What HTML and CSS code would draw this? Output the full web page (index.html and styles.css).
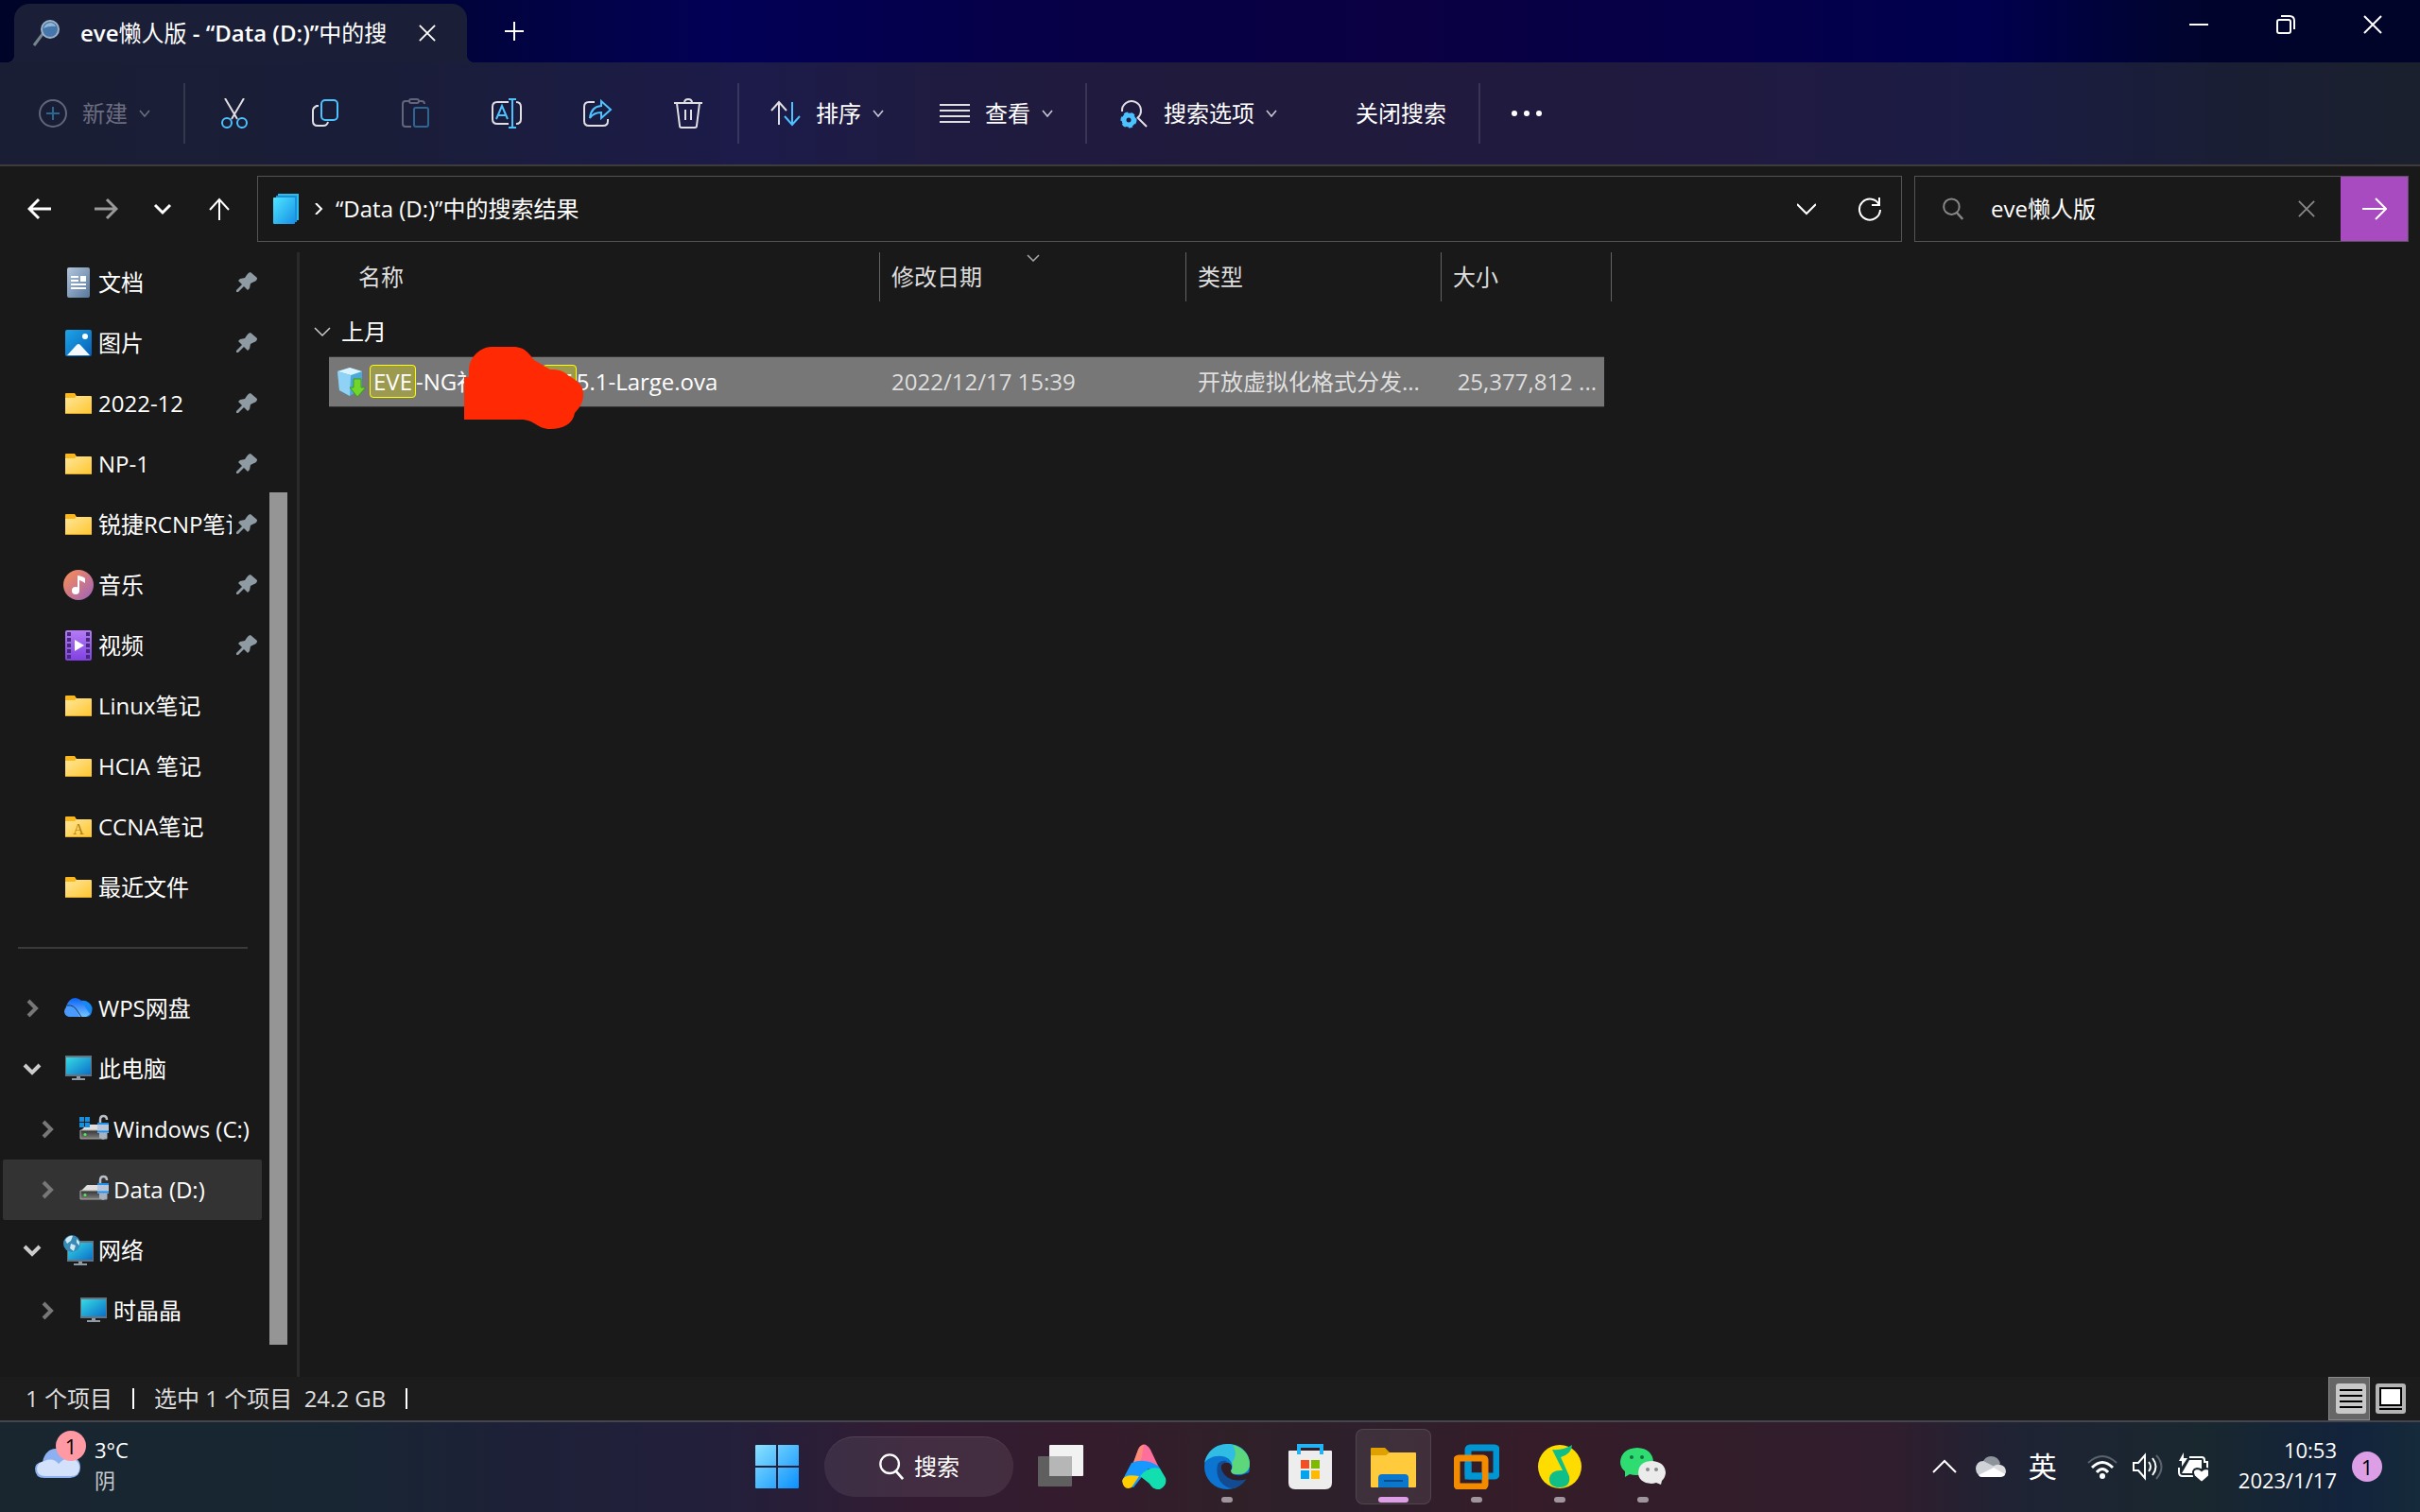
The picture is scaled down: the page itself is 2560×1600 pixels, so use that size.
FILE: index.html
```html
<!DOCTYPE html>
<html lang="zh-CN">

<head>
    <meta charset="utf-8">
    <title>eve懒人版 - “Data (D:)”中的搜索结果</title>
    <link rel="stylesheet" href="styles.css">
</head>

<body>
    <!-- shared icons -->
    <svg class="sprite" aria-hidden="true">
        <defs>
            <linearGradient id="g-folder" x1="0" y1="0" x2="1" y2="1"><stop offset="0" stop-color="#ffe69a"/><stop offset="1" stop-color="#ffc62f"/></linearGradient>
            <linearGradient id="g-screen" x1="0" y1="0" x2="1" y2="1"><stop offset="0" stop-color="#36dbe4"/><stop offset="1" stop-color="#0a6fc9"/></linearGradient>
            <linearGradient id="g-pages" x1="0" y1="0" x2="1" y2="1"><stop offset="0" stop-color="#4fe6ff"/><stop offset="1" stop-color="#1690e6"/></linearGradient>
            <linearGradient id="g-doc" x1="0" y1="0" x2="1" y2="1"><stop offset="0" stop-color="#b3c6dc"/><stop offset="1" stop-color="#57779c"/></linearGradient>
            <linearGradient id="g-pic" x1="0" y1="0" x2="1" y2="1"><stop offset="0" stop-color="#1ea5e8"/><stop offset="1" stop-color="#0560b8"/></linearGradient>
            <linearGradient id="g-music" x1="0" y1="0" x2="1" y2="1"><stop offset="0" stop-color="#ff8f4f"/><stop offset="1" stop-color="#9b62c0"/></linearGradient>
            <linearGradient id="g-video" x1="0" y1="0" x2="0" y2="1"><stop offset="0" stop-color="#b57bf6"/><stop offset="1" stop-color="#8140e2"/></linearGradient>
            <linearGradient id="g-win" x1="0" y1="0" x2="1" y2="1"><stop offset="0" stop-color="#8be2ff"/><stop offset="1" stop-color="#0a90ff"/></linearGradient>
            <linearGradient id="g-blue" x1="0" y1="0" x2="0" y2="1"><stop offset="0" stop-color="#0a62f5"/><stop offset="1" stop-color="#77c4ff"/></linearGradient>
            <linearGradient id="g-drive" x1="0" y1="0" x2="0" y2="1"><stop offset="0" stop-color="#333"/><stop offset="1" stop-color="#7d7d7d"/></linearGradient>
        </defs>
        <symbol id="chev-down" viewBox="0 0 12 12"><path d="M1 3l5 6 5-6" fill="none" stroke="currentColor" stroke-width="1.6"/></symbol>
        <symbol id="x" viewBox="0 0 20 20"><path d="M1 1l18 18M19 1L1 19" fill="none" stroke="currentColor" stroke-width="2"/></symbol>
        <symbol id="chev-tree" viewBox="0 0 20 20"><path d="M6 2l8 8-8 8" fill="none" stroke="currentColor" stroke-width="4"/></symbol>
        <symbol id="pin" viewBox="0 0 22 22"><path d="M11 3q2-3 4-3l7 6q0 3-3 4l-4 2-1 5-2 2-4-4-6 6H0v-2l6-6-4-4 2-2 5-1z" fill="#8f9ba3"/></symbol>
        <symbol id="folder" viewBox="0 0 32 32"><path d="M2 6q0-1 1-1h9l2 3h15v6H2z" fill="#fbb81c"/><path d="M2 10h10l2-2h15q1 0 1 1v17q0 1-1 1H3q-1 0-1-1z" fill="url(#g-folder)"/><path d="M2 26.500h28" stroke="#e0a72b"/></symbol>
        <symbol id="monitor" viewBox="0 0 32 32"><path d="M2 2h28v22H2z" fill="#68727c"/><path d="M3 4h26v18H3z" fill="url(#g-screen)"/><path d="M14 24h4v2h5v2H9v-2h5z" fill="#8f9ba5"/></symbol>
        <symbol id="drive" viewBox="0 0 32 32"><path d="M2 18l7-7h20v9H2z" fill="#dedede"/><path d="M2 17h28v9H2z" fill="url(#g-drive)" stroke="#aaa"/><circle cx="7" cy="21.500" r="1.500" fill="#4df04d"/><path d="M23 11V6q0-4 3.500-4T30 6" fill="none" stroke="#b9c0c8" stroke-width="2.500"/><path d="M20 10h12v10H20z" fill="#b9c7dc"/><path d="M20 10h12M20 18.500h12" stroke="#2090ea" stroke-width="2"/><path d="M22 20h8v5l-4 2-4-2z" fill="#a6b2bd"/></symbol>
        <symbol id="mag" viewBox="0 0 28 30"><circle cx="12" cy="12" r="10.500" fill="none" stroke="currentColor" stroke-width="2.500"/><path d="M19 20l8 9" stroke="currentColor" stroke-width="3"/></symbol>
    </svg>

    <header class="chrome">
        <div class="titlebar">
            <div class="tab">
                <svg class="ico-28" viewBox="0 0 28 28"><path d="M1 27l9-12" stroke="#75858c" stroke-width="3"/><circle cx="18" cy="10" r="9" fill="#4576ac" stroke="#9db4c6" stroke-width="2"/><path d="M11 9q2-6 8-6 4 1 5 4-7-1-13 2z" fill="#94b6d5"/></svg>
                <span class="tab-title"><b>eve</b>懒人版<b> - “Data (D:)”</b>中的搜</span>
                <button class="plain" aria-label="关闭标签页"><svg class="ico-18"><use href="#x"/></svg></button>
            </div>
            <button class="plain new-tab" aria-label="新标签页"><svg class="ico-20" viewBox="0 0 20 20"><path d="M10 0v20M0 10h20" stroke="#fff" stroke-width="2"/></svg></button>
            <div class="window-buttons">
                <button class="plain" aria-label="最小化"><svg class="ico-20" viewBox="0 0 20 20"><path d="M0 10h20" stroke="#fff" stroke-width="2"/></svg></button>
                <button class="plain" aria-label="还原"><svg class="ico-20" viewBox="0 0 20 20"><rect x="1" y="5" width="14" height="14" rx="2" fill="none" stroke="#fff" stroke-width="2"/><path d="M5 1h9q5 0 5 5v9" fill="none" stroke="#fff" stroke-width="2"/></svg></button>
                <button class="plain" aria-label="关闭"><svg class="ico-20"><use href="#x"/></svg></button>
            </div>
        </div>

        <div class="toolbar">
            <button class="tool tool-new" disabled>
                <svg class="ico-30" viewBox="0 0 30 30"><circle cx="15" cy="15" r="14" fill="none" stroke="#63657a" stroke-width="2"/><path d="M15 8v14M8 15h14" stroke="#2d6690" stroke-width="2"/></svg>
                <span>新建</span><svg class="ico-12"><use href="#chev-down"/></svg>
            </button>
            <span class="sep"></span>
            <button class="tool tool-icon" aria-label="剪切"><svg class="ico-32" viewBox="0 0 32 32" fill="none" stroke-width="2"><path d="M6 0l13 22M26 0L13 22" stroke="#e0e0e4"/><circle cx="8" cy="26" r="5" stroke="#4cc2ff"/><circle cx="24" cy="26" r="5" stroke="#4cc2ff"/></svg></button>
            <button class="tool tool-icon" aria-label="复制"><svg class="ico-32" viewBox="0 0 32 32" fill="none" stroke-width="2"><path d="M9 8H7q-4 2-4 5v11q0 5 5 5h6q4 0 5-4" stroke="#e0e0e4"/><rect x="12" y="2" width="17" height="21" rx="4" stroke="#4cc2ff"/></svg></button>
            <button class="tool tool-icon" disabled aria-label="粘贴"><svg class="ico-32" viewBox="0 0 32 32" fill="none" stroke-width="2"><path d="M10 3H5q-3 0-3 3v21q0 3 3 3h6M19 3h3q3 0 3 3" stroke="#63657a"/><rect x="9" y="1" width="10" height="4" rx="2" stroke="#63657a"/><rect x="14" y="10" width="15" height="20" rx="2" stroke="#2d6690"/></svg></button>
            <button class="tool tool-icon" aria-label="重命名"><svg class="ico-32" viewBox="0 0 32 32" fill="none" stroke-width="2"><path d="M18 4H6Q1 4 1 9v13q0 5 5 5h12M26 4q5 0 5 5v13q0 5-5 5" stroke="#e0e0e4"/><path d="M5 22l6-14 6 14M7 18h8M22 1v30M18 1h8M18 31h8" stroke="#4cc2ff"/></svg></button>
            <button class="tool tool-icon" aria-label="共享"><svg class="ico-32" viewBox="0 0 32 32" fill="none" stroke-width="2"><path d="M13 4H7Q2 4 2 9v15q0 5 5 5h15q5 0 5-5v-2" stroke="#e0e0e4"/><path d="M20 3l10 9-10 9v-6q-8 0-12 6 1-12 12-13z" stroke="#4cc2ff"/></svg></button>
            <button class="tool tool-icon" aria-label="删除"><svg class="ico-32" viewBox="0 0 32 32" fill="none" stroke="#e0e0e4" stroke-width="2"><path d="M1 5h30M12 5q0-4 4-4t4 4M4 5l3 24q0 2 2 2h14q2 0 2-2l3-24M13 12v11M19 12v11"/></svg></button>
            <span class="sep"></span>
            <button class="tool">
                <svg class="ico-32" viewBox="0 0 32 32" fill="none" stroke-width="2"><path d="M9 28V5M1 13l8-9 8 9" stroke="#e0e0e4"/><path d="M23 4v23M15 19l8 9 8-9" stroke="#4cc2ff"/></svg>
                <span>排序</span><svg class="ico-12"><use href="#chev-down"/></svg>
            </button>
            <button class="tool">
                <svg class="ico-32" viewBox="0 0 32 32"><path d="M0 7h32M0 13h32M0 19h32M0 25h32" stroke="#e0e0e4" stroke-width="2"/></svg>
                <span>查看</span><svg class="ico-12"><use href="#chev-down"/></svg>
            </button>
            <span class="sep"></span>
            <button class="tool">
                <svg class="ico-32" viewBox="0 0 32 32" fill="none"><path d="M4 14a10 10 0 1 1 16 7M20 20l10 10" stroke="#e0e0e4" stroke-width="2"/><circle cx="11" cy="23" r="5" stroke="#4cc2ff" stroke-width="5"/><circle cx="11" cy="23" r="7" stroke="#4cc2ff" stroke-width="3" stroke-dasharray="4 3"/></svg>
                <span>搜索选项</span><svg class="ico-12"><use href="#chev-down"/></svg>
            </button>
            <button class="tool tool-close">关闭搜索</button>
            <span class="sep"></span>
            <button class="tool" aria-label="更多"><svg class="ico-32" viewBox="0 0 32 32" fill="#fff"><circle cx="3" cy="16" r="3"/><circle cx="16" cy="16" r="3"/><circle cx="29" cy="16" r="3"/></svg></button>
        </div>
    </header>

    <nav class="navbar">
        <button class="plain nav-btn" aria-label="后退"><svg class="ico-26" viewBox="0 0 26 26" fill="none" stroke="#fff" stroke-width="3"><path d="M25 13H2M12 3L2 13l10 10"/></svg></button>
        <button class="plain nav-btn" aria-label="前进"><svg class="ico-26" viewBox="0 0 26 26" fill="none" stroke="#9a9a9a" stroke-width="3"><path d="M1 13h23M14 3l10 10-10 10"/></svg></button>
        <button class="plain nav-btn nav-recent" aria-label="最近位置"><svg class="ico-20" viewBox="0 0 20 20" fill="none" stroke="#fff" stroke-width="3"><path d="M2 6l8 8 8-8"/></svg></button>
        <button class="plain nav-btn" aria-label="上移"><svg class="ico-26" viewBox="0 0 26 26" fill="none" stroke="#fff" stroke-width="2"><path d="M13 25V3M3 14L13 3l10 11"/></svg></button>
        <div class="address">
            <svg class="ico-32" viewBox="0 0 32 32"><path d="M7 0h22v28H7z" fill="#2fbbe8"/><path d="M5 2h22v28H5z" fill="#1a90d8"/><path d="M2 5q0-1 1-1h21q1 0 1 1v26q0 1-1 1H3q-1 0-1-1z" fill="url(#g-pages)"/></svg>
            <svg class="ico-12 crumb-chev" viewBox="0 0 12 12"><path d="M3 0l6 6-6 6" fill="none" stroke="#fff" stroke-width="2"/></svg>
            <a class="crumb" href="#">“Data (D:)”中的搜索结果</a>
            <button class="plain" aria-label="展开"><svg class="ico-20" viewBox="0 0 20 20" fill="none" stroke="#fff" stroke-width="2"><path d="M0 5l10 10L20 5"/></svg></button>
            <button class="plain" aria-label="刷新"><svg class="ico-26" viewBox="0 0 26 26" fill="none" stroke="#fff" stroke-width="2"><path d="M23 9A11 11 0 1 0 24 14M23 1v8h-8"/></svg></button>
        </div>
        <form class="search">
            <svg class="ico-22" aria-hidden="true"><use href="#mag"/></svg>
            <input type="text" value="eve懒人版" aria-label="搜索">
            <button class="plain search-clear" type="button" aria-label="清除"><svg class="ico-18"><use href="#x"/></svg></button>
            <button class="search-go" type="button" aria-label="转到"><svg class="ico-26" viewBox="0 0 26 26" fill="none" stroke="#fff" stroke-width="2"><path d="M0 13h24M14 2l11 11-11 11"/></svg></button>
        </form>
    </nav>

    <main class="main">
        <aside class="sidebar">
            <ul class="tree">
                <li><a href="#"><svg class="ico-32" viewBox="0 0 32 32"><rect x="4" width="24" height="32" rx="2" fill="url(#g-doc)"/><path d="M8 10h8M8 14h8M8 18h16M8 22h16" stroke="#fff" stroke-width="2"/><path d="M18 9h6v6h-6z" fill="#fff"/></svg><span>文档</span><svg class="pin"><use href="#pin"/></svg></a></li>
                <li><a href="#"><svg class="ico-32" viewBox="0 0 32 32"><rect x="2" y="2" width="28" height="28" rx="2" fill="url(#g-pic)"/><path d="M4 29l10-11q2-2 4 0l10 11z" fill="#f4f9ff"/><circle cx="23" cy="9" r="3" fill="#fff"/></svg><span>图片</span><svg class="pin"><use href="#pin"/></svg></a></li>
                <li><a href="#"><svg class="ico-32"><use href="#folder"/></svg><span>2022-12</span><svg class="pin"><use href="#pin"/></svg></a></li>
                <li><a href="#"><svg class="ico-32"><use href="#folder"/></svg><span>NP-1</span><svg class="pin"><use href="#pin"/></svg></a></li>
                <li><a href="#"><svg class="ico-32"><use href="#folder"/></svg><span>锐捷RCNP笔记</span><svg class="pin"><use href="#pin"/></svg></a></li>
                <li><a href="#"><svg class="ico-32" viewBox="0 0 32 32"><circle cx="16" cy="16" r="16" fill="url(#g-music)"/><circle cx="13" cy="22" r="4" fill="#fff"/><path d="M15 6q6 1 8 3v5q-3-2-6-3v11h-2z" fill="#fff"/></svg><span>音乐</span><svg class="pin"><use href="#pin"/></svg></a></li>
                <li><a href="#"><svg class="ico-32" viewBox="0 0 32 32"><rect x="2" width="28" height="32" rx="2" fill="url(#g-video)"/><path d="M6 2v28M26 2v28" stroke="#452a75" stroke-width="4" stroke-dasharray="4 2"/><path d="M12 10l10 6-10 6z" fill="#fff"/></svg><span>视频</span><svg class="pin"><use href="#pin"/></svg></a></li>
                <li><a href="#"><svg class="ico-32"><use href="#folder"/></svg><span>Linux笔记</span></a></li>
                <li><a href="#"><svg class="ico-32"><use href="#folder"/></svg><span>HCIA 笔记</span></a></li>
                <li><a href="#"><svg class="ico-32" viewBox="0 0 32 32"><use href="#folder"/><text x="16" y="24" class="folder-letter">A</text></svg><span>CCNA笔记</span></a></li>
                <li><a href="#"><svg class="ico-32"><use href="#folder"/></svg><span>最近文件</span></a></li>
                <li class="divider"><hr></li>
                <li><a href="#"><svg class="arrow"><use href="#chev-tree"/></svg><svg class="ico-32" viewBox="0 0 32 32"><path d="M16 9q6-3 11 1 5 4 3 10-1 5-6 5H14z" fill="#1789f2"/><path d="M3 14Q6 5 13 5q7 1 9 8l6 9-4 3H6z" fill="url(#g-blue)"/><path d="M1 19q1-6 7-6 5 1 9 12H6q-5-1-5-6z" fill="#4b9bff"/><path d="M4 13q7-1 11 6l4 6" fill="none" stroke="#14375c"/></svg><span>WPS网盘</span></a></li>
                <li><a href="#"><svg class="arrow open"><use href="#chev-tree"/></svg><svg class="ico-32"><use href="#monitor"/></svg><span>此电脑</span></a></li>
                <li class="child"><a href="#"><svg class="arrow"><use href="#chev-tree"/></svg><svg class="ico-32" viewBox="0 0 32 32"><use href="#drive"/><path d="M1 3h5v5H1zM7 3h5v5H7zM1 9h5v5H1zM7 9h5v5H7z" fill="#1590e0"/></svg><span>Windows (C:)</span></a></li>
                <li class="child selected"><a href="#"><svg class="arrow"><use href="#chev-tree"/></svg><svg class="ico-32"><use href="#drive"/></svg><span>Data (D:)</span></a></li>
                <li><a href="#"><svg class="arrow open"><use href="#chev-tree"/></svg><svg class="ico-32" viewBox="0 0 32 32"><path d="M4 6h28v22H4z" fill="#68727c"/><path d="M5 8h26v18H5z" fill="url(#g-screen)"/><path d="M16 28h4v2h5v2H11v-2h5z" fill="#8f9ba5"/><circle cx="9" cy="9" r="9" fill="#388bb7"/><path d="M2 5q4-5 8-4l-2 5-4 3zM8 9l5 2-2 6-4-3zM14 4l3 3v4l-3-3z" fill="#cdeaf2"/></svg><span>网络</span></a></li>
                <li class="child"><a href="#"><svg class="arrow"><use href="#chev-tree"/></svg><svg class="ico-32"><use href="#monitor"/></svg><span>时晶晶</span></a></li>
            </ul>
            <div class="scrollbar"><div class="thumb"></div></div>
        </aside>

        <section class="files">
            <table>
                <colgroup><col class="c-gutter"><col class="c-name"><col class="c-date"><col class="c-type"><col class="c-size"><col class="c-end"></colgroup>
                <thead>
                    <tr>
                        <th></th>
                        <th class="h-name">名称</th>
                        <th><svg class="sort-mark" viewBox="0 0 14 8"><path d="M1 1l6 6 6-6" fill="none" stroke="#aaa" stroke-width="1.500"/></svg>修改日期</th>
                        <th>类型</th>
                        <th class="h-size" colspan="2">大小</th>
                    </tr>
                </thead>
                <tbody>
                    <tr class="group">
                        <td colspan="6"><button class="plain"><svg class="ico-18" viewBox="0 0 18 18"><path d="M1 5l8 8 8-8" fill="none" stroke="#ccc" stroke-width="1.500"/></svg>上月</button></td>
                    </tr>
                    <tr class="file">
                        <td class="blank"></td>
                        <td class="f-name">
                            <div class="name-line">
                                <svg class="ico-32" viewBox="0 0 32 32"><path d="M2 5L15 1l13 4v18l-13 8L4 25z" fill="#4aa9d8"/><path d="M2 5L15 1l13 4-12 4z" fill="#d9f4ff"/><path d="M2 5l14 4-1 22-11-6z" fill="#8fd2f5"/><path d="M19 13h8v9h5l-9 10-8-10h4z" fill="#72d52c" stroke="#3e9b19"/></svg>
                                <span class="file-name"><mark>EVE</mark>-NG社</span>
                                <span class="file-tail"><mark>VE</mark>5.1-Large.ova</span>
                                <svg class="scribble" viewBox="0 0 126 87"><path d="M0 32h5v-9C6 11 17 0 29 0h22c14 0 17 7 23 14l17 10c9 0 14 1 20 7 10 5 15 11 15 19 0 9-3 13-9 20-2 12-13 17-26 17-14 0-16-10-31-10H0z" fill="#ff2a04"/></svg>
                            </div>
                        </td>
                        <td>2022/12/17 15:39</td>
                        <td>开放虚拟化格式分发...</td>
                        <td class="f-size">25,377,812 ...</td>
                        <td class="blank"></td>
                    </tr>
                </tbody>
            </table>
        </section>
    </main>

    <div class="statusbar">
        <span>1 个项目</span><i class="bar"></i>
        <span>选中 1 个项目&nbsp; 24.2 GB</span><i class="bar"></i>
        <div class="views">
            <button class="view active" aria-label="详细信息"><svg class="ico-32" viewBox="0 0 32 32"><rect width="32" height="32" rx="3" fill="#c8c8c8"/><path d="M4 7h24M4 13h24M4 19h24M4 25h24" stroke="#000" stroke-width="2"/></svg></button>
            <button class="view" aria-label="大图标"><svg class="ico-32" viewBox="0 0 32 32"><rect width="32" height="32" rx="3" fill="#b4b4b4"/><rect x="5" y="5" width="22" height="18" fill="#fff" stroke="#000" stroke-width="2"/><path d="M4 27h24" stroke="#000" stroke-width="2"/></svg></button>
        </div>
    </div>

    <footer class="taskbar">
        <div class="weather">
            <div class="weather-icon">
                <svg viewBox="0 0 48 32"><path d="M8 14C10 5 15 0 22 0q8 0 12 8 14 0 14 12 0 10-11 11H10Q0 31 0 21q0-6 8-7z" fill="#8cb0f0"/><path d="M10 13q9-4 15 3 6-7 14-6 8 3 8 10 0 9-9 9H11q-9 0-9-8 1-7 8-8z" fill="#d3e2fa"/></svg>
                <span class="badge">1</span>
            </div>
            <div class="weather-text"><span>3°C</span><span class="dim">阴</span></div>
        </div>

        <div class="apps">
            <button class="app" aria-label="开始"><svg class="ico-48" viewBox="0 0 48 48"><path d="M2 1h21v22H1V2q0-1 1-1zM25 1h21q1 0 1 1v21H25zM1 25h22v22H2q-1 0-1-1zM25 25h22v21q0 1-1 1H25z" fill="url(#g-win)"/></svg></button>
            <button class="pill"><svg class="ico-28"><use href="#mag"/></svg><span>搜索</span></button>
            <button class="app" aria-label="任务视图"><svg class="ico-48" viewBox="0 0 48 48"><rect x="12" y="1" width="36" height="33" rx="1" fill="#f2f2f2"/><rect y="13" width="36" height="32" rx="1" fill="#5f5f5f"/><path d="M12 13h24v21H12z" fill="#b6b6b6"/></svg></button>
            <button class="app" aria-label="Copilot"><svg class="ico-48" viewBox="0 0 48 48"><path d="M12 22L18 6q6-11 13 0l9 19q-15-11-28-3z" fill="#ff6f9d"/><path d="M13 20L18 6q2-5 6-5l-3 16z" fill="#ff8c78"/><path d="M2 37l9-17q15-6 29 4l6 12q-6-5-17-10L13 46q-8-2-11-9z" fill="#1798ff"/><path d="M20 34q9-11 21-8l6 10q2 8-6 12-7 1-11-6z" fill="#13deb0"/><path d="M1 39q2-8 18-5l-8 12q-8 4-10-7z" fill="#ffcd00"/></svg></button>
            <button class="app running" aria-label="Edge"><svg class="ico-48" viewBox="0 0 48 48"><circle cx="24" cy="24" r="24" fill="#0c75d1"/><path d="M0 20C4 4 16 0 25 0c14 0 23 10 23 21 0 8-6 11-12 11-6 0-9-1-8-4 3-3 2-14-10-15C10 12 3 16 0 20z" fill="#2fbde4"/><path d="M30 1c11 3 18 11 18 20 0 8-6 11-12 11-6 0-9-1-8-4 2-1 3-4 1-8 5-7 5-12 1-19z" fill="#5cd77c"/><path d="M14 22c-3 13 5 25 17 25 6-2 11-6 14-11-8 4-20 2-24-5-4-6-1-11 3-13-5-1-9 1-10 4z" fill="#134b93"/><path d="M18 23q3-5 8-3 5 3 2 8 0 6 11 5l9-3v8l-3-1q-12 4-21-2-7-6-6-12z" fill="#2f1d28"/></svg></button>
            <button class="app" aria-label="Microsoft Store"><svg class="ico-48" viewBox="0 0 48 48"><path d="M1 8q0-1 1-1h44q1 0 1 1v33q0 7-7 7H8q-7 0-7-7z" fill="#ededed"/><path d="M12 11V2h24v9" fill="none" stroke="#21b3f3" stroke-width="4"/><path d="M14 17h9v9h-9z" fill="#f25022"/><path d="M25 17h9v9h-9z" fill="#7fba00"/><path d="M14 28h9v9h-9z" fill="#00a4ef"/><path d="M25 28h9v9h-9z" fill="#ffb900"/></svg></button>
            <button class="app running current" aria-label="文件资源管理器"><svg class="ico-48" viewBox="0 0 48 48"><path d="M0 5q0-1 1-1h14l5 5v9H0z" fill="#e0a000"/><path d="M0 12h16l4-3h27q1 0 1 1v35q0 1-1 1H1q-1 0-1-1z" fill="#ffcb3c"/><path d="M8 46V36q0-4 4-4h24q4 0 4 4v10z" fill="#0a76cc"/><path d="M14 39h20" stroke="#084b8f" stroke-width="2"/></svg></button>
            <button class="app running" aria-label="VMware"><svg class="ico-48" viewBox="0 0 48 48" fill="none" stroke-width="7"><rect x="15" y="4" width="30" height="30" rx="2" stroke="#0095d3"/><rect x="3" y="15" width="30" height="30" rx="2" stroke="#f38b00"/><path d="M15 20v14h15" stroke="#0095d3"/></svg></button>
            <button class="app running" aria-label="QQ音乐"><svg class="ico-48" viewBox="0 0 48 48"><circle cx="24" cy="24" r="23" fill="#ffdc00"/><path d="M16 6q12 1 21-5 0 9-12 13l9 20q2 12-11 12-11-1-10-10 2-9 14-8z" fill="#10bf88"/></svg></button>
            <button class="app running" aria-label="微信"><svg class="ico-48" viewBox="0 0 48 48"><path d="M5 29q-5-4-5-10Q1 5 18 4q16 1 17 15-1 14-18 14-4 0-7-1l-5 3z" fill="#2fdc71"/><circle cx="12" cy="14" r="2" fill="#13713c"/><circle cx="23" cy="14" r="2" fill="#13713c"/><path d="M43 43l-5-2q-3 1-5 1-14-1-14-12 1-12 15-12 13 1 14 12 0 5-4 9z" fill="#ebebeb"/><circle cx="29" cy="27" r="2" fill="#8a8a8a"/><circle cx="38" cy="27" r="2" fill="#8a8a8a"/></svg></button>
        </div>

        <div class="tray">
            <button class="plain" aria-label="显示隐藏的图标"><svg class="ico-26" viewBox="0 0 26 26"><path d="M1 19l12-12 12 12" fill="none" stroke="#fff" stroke-width="2"/></svg></button>
            <svg class="ico-32" viewBox="0 0 32 32"><path d="M7 12q3-7 9-7 8 0 10 8l-10 6z" fill="#8e949c"/><path d="M3 25Q0 22 0 18q1-8 8-8l16 8-14 9H7q-3 0-4-2z" fill="#cfd3d8"/><path d="M18 16q4-3 8-2 6 1 6 8l-2 4z" fill="#ddd"/><path d="M3 25l16-8 12 7q-1 3-5 3H7q-3 0-4-2z" fill="#fff"/></svg>
            <span class="ime">英</span>
            <svg class="ico-32" viewBox="0 0 32 32" fill="none" stroke-width="2"><path d="M1 12q15-14 30 0" stroke="#59626d"/><path d="M5 17q11-11 22 0M10 22q6-7 12 0" stroke="#fff" stroke-width="3"/><circle cx="16" cy="26" r="3" fill="#fff"/></svg>
            <svg class="ico-32" viewBox="0 0 32 32" fill="none" stroke="#fff" stroke-width="2"><path d="M1 12h5l7-8v24l-7-8H1zM17 11q4 5 0 10M21 7q7 9 0 18"/><path d="M25 4q11 12 0 25" stroke="#59626d"/></svg>
            <svg class="ico-32" viewBox="0 0 32 32"><path d="M12 6h13q3 0 3 3v2h3v8M1 17v5q0 4 4 4h11" fill="none" stroke="#fff" stroke-width="2"/><path d="M12 9h13v9l-7 2-2 3H4z" fill="#fff"/><path d="M6 1l-5 9h3v6l6-9H6z" fill="#fff"/><path d="M25 33l-8-7q-3-7 3-8 3 0 5 2 2-2 5-2 6 1 3 8z" fill="#fff" stroke="#19262f" stroke-width="2"/></svg>
            <div class="clock"><span>10:53</span><span>2023/1/17</span></div>
            <span class="badge notice">1</span>
        </div>
    </footer>
</body>

</html>
```
FILE: styles.css
```css
* {
    box-sizing: border-box;
}

body {
    margin: 0;
    min-height: 100vh;
    display: flex;
    flex-direction: column;
    background: #191919;
    color: #fff;
    font-family: "Open Sans", "Noto Sans CJK SC", sans-serif;
    font-size: 24px;
    line-height: 32px;
}

button,
input {
    font: inherit;
    color: inherit;
    border: 0;
    padding: 0;
    background: none;
}

a {
    color: inherit;
    text-decoration: none;
}

svg {
    display: block;
    flex: none;
}

.sprite {
    position: absolute;
    width: 0;
    height: 0;
}

.plain {
    display: flex;
    align-items: center;
    justify-content: center;
}

/* icon sizes */
.ico-12 { width: 12px; height: 12px; }
.ico-18 { width: 18px; height: 18px; }
.ico-20 { width: 20px; height: 20px; }
.ico-22 { width: 22px; height: 24px; }
.ico-26 { width: 26px; height: 26px; }
.ico-28 { width: 28px; height: 28px; }
.ico-30 { width: 30px; height: 30px; }
.ico-32 { width: 32px; height: 32px; }
.ico-48 { width: 48px; height: 48px; }

/* title bar and toolbar */
.chrome {
    background: linear-gradient(90deg, #000428 0%, #000434 16%, #020056 30%, #060048 42%, #0a0042 58%, #060048 70%, #00004e 82%, #00042e 90%, #000428 100%);
    border-bottom: 2px solid #3c3c3c;
}

.titlebar {
    display: flex;
    height: 66px;
    padding-left: 15px;
}

.tab {
    position: relative;
    display: flex;
    align-items: center;
    width: 479px;
    margin-top: 4px;
    padding: 0 33px 0 20px;
    border-radius: 16px 16px 0 0;
    background: #1a1e36;
}

.tab::before,
.tab::after {
    content: "";
    position: absolute;
    bottom: 0;
    width: 8px;
    height: 8px;
}

.tab::before {
    left: -8px;
    background: radial-gradient(circle at 0 0, transparent 8px, #1a1e36 8px);
}

.tab::after {
    right: -8px;
    background: radial-gradient(circle at 100% 0, transparent 8px, #1a1e36 8px);
}

.tab-title {
    flex: 1;
    margin-left: 22px;
    white-space: nowrap;
}

.tab-title b {
    font-weight: 600;
}

.new-tab {
    width: 100px;
}

.window-buttons {
    display: flex;
    height: 52px;
    margin-left: auto;
    padding-right: 4px;
}

.window-buttons button {
    width: 92px;
}

.toolbar {
    display: flex;
    align-items: center;
    height: 108px;
    background: linear-gradient(90deg, #1a1e34 0%, #1a1d38 16%, #1c1b4a 31%, #1f1b40 39%, #201a3c 52%, #211a40 70%, #1b1c44 82%, #1a1e34 92%, #1b202e 100%);
}

.tool {
    display: flex;
    align-items: center;
    height: 72px;
    padding: 0 30px 0 29px;
    white-space: nowrap;
}

.tool span {
    margin: 0 12px 0 16px;
}

.tool .ico-12 {
    color: #c8c8d2;
}

.tool-new {
    padding: 0 31px 0 41px;
    color: #6b6d80;
}

.tool-new .ico-12 {
    color: #6b6d80;
}

.tool-icon {
    padding: 0 32px;
}

.tool-close {
    margin-left: 24px;
}

.sep {
    width: 2px;
    height: 64px;
    margin: 0 4px;
    background: rgba(255, 255, 255, .12);
}

/* navigation row */
.navbar {
    display: flex;
    padding: 10px 12px 11px 7px;
}

.nav-btn {
    width: 70px;
    height: 70px;
}

.nav-recent {
    width: 50px;
}

.address {
    flex: 1;
    display: flex;
    align-items: center;
    height: 70px;
    margin: 0 13px 0 5px;
    padding: 0 20px 0 14px;
    border: 1px solid #535353;
}

.crumb-chev {
    margin: 0 12px 0 12px;
}

.crumb {
    flex: 1;
}

.address button {
    margin-left: 44px;
}

.search {
    display: flex;
    align-items: center;
    width: 523px;
    height: 70px;
    padding-left: 29px;
    border: 1px solid #535353;
    color: #888;
}

.search input {
    flex: 1;
    min-width: 0;
    margin-left: 29px;
    color: #fff;
    outline: none;
}

.search-clear {
    width: 72px;
    height: 68px;
}

.search-go {
    display: flex;
    align-items: center;
    justify-content: center;
    width: 71px;
    height: 68px;
    background: #a94bc0;
}

/* body */
.main {
    flex: 1;
    display: flex;
}

.sidebar {
    display: flex;
    width: 317px;
    border-right: 3px solid #2a2a2a;
}

.tree {
    width: 277px;
    margin: 0;
    padding: 0 0 0 3px;
    list-style: none;
}

.tree li {
    height: 64px;
}

.tree a {
    display: flex;
    align-items: center;
    height: 64px;
    padding: 0 5px 0 64px;
    white-space: nowrap;
}

.tree span {
    flex: 1;
    min-width: 0;
    margin-left: 5px;
    overflow: hidden;
}

.tree .child a {
    padding: 0 0 0 80px;
}

.tree .selected {
    background: #333;
    border-radius: 2px;
}

.tree .pin {
    width: 22px;
    height: 22px;
    margin-left: 5px;
}

.arrow {
    width: 20px;
    height: 20px;
    margin: 0 23px 0 -43px;
    color: #777;
}

.arrow.open {
    color: #ccc;
    transform: rotate(90deg);
}

.divider {
    padding: 31px 15px 0 16px;
}

.divider hr {
    margin: 0;
    border: 0;
    border-top: 2px solid #3a3a3a;
}

.folder-letter {
    font-family: "Liberation Serif", serif;
    font-size: 16px;
    text-anchor: middle;
    fill: #b27d0c;
}

.scrollbar {
    display: flex;
    flex-direction: column;
    justify-content: flex-end;
    width: 27px;
    padding: 0 0 34px 8px;
}

.thumb {
    width: 19px;
    height: 78%;
    background: #959595;
}

/* file list */
.files {
    flex: 1;
    padding-left: 15px;
}

table {
    table-layout: fixed;
    width: 1373px;
    border-collapse: separate;
    border-spacing: 0;
}

.c-gutter { width: 16px; }
.c-name { width: 583px; }
.c-date { width: 324px; }
.c-type { width: 270px; }
.c-size { width: 172px; }
.c-end { width: 8px; }

th {
    position: relative;
    height: 52px;
    padding: 0 0 0 12px;
    border-right: 1px solid #636363;
    color: #dedede;
    font-weight: 400;
    text-align: left;
}

th:first-child {
    border: 0;
}

.h-name {
    padding-left: 31px;
}

.sort-mark {
    position: absolute;
    top: 2px;
    left: calc(50% - 7px);
    width: 14px;
    height: 8px;
}

td {
    padding: 0 0 0 12px;
    white-space: nowrap;
}

.group td {
    height: 58px;
    padding: 6px 0 0;
}

.group button {
    gap: 11px;
}

.file td {
    height: 54px;
    background: #777;
    color: #dedede;
    border: solid #333;
    border-width: 1px 0;
}

.file .blank {
    padding: 0;
    background: none;
    border: 0;
}

.file .f-name {
    padding-left: 7px;
    color: #fff;
}

.file .f-size {
    padding: 0 8px 0 0;
    text-align: right;
}

.name-line {
    position: relative;
    display: flex;
    align-items: center;
}

.file-name {
    width: 183px;
    margin-left: 4px;
}

mark {
    padding: 0 3px;
    border: 1px solid #ff0;
    border-radius: 4px;
    background: #9c9a4e;
    color: #fff;
}

/* hand-drawn cover over the middle of the name */
.scribble {
    position: absolute;
    top: -21px;
    left: 136px;
    width: 126px;
    height: 87px;
}

/* status bar */
.statusbar {
    display: flex;
    align-items: center;
    height: 46px;
    padding: 0 12px 0 27px;
    background: #1c1c1c;
    color: #dedede;
}

.bar {
    width: 2px;
    height: 22px;
    margin: 0 21px;
    background: #fff;
}

.views {
    display: flex;
    gap: 4px;
    margin-left: auto;
    padding-right: 3px;
}

.view {
    display: flex;
    align-items: center;
    justify-content: flex-end;
    width: 34px;
    height: 46px;
}

.view.active {
    width: 44px;
    padding-right: 3px;
    border: 1px solid #8a8a8a;
    background: #666;
}

/* task bar */
.taskbar {
    display: grid;
    grid-template-columns: 1fr auto 1fr;
    align-items: center;
    height: 97px;
    padding-bottom: 2px;
    border-top: 2px solid #45464d;
    background: linear-gradient(90deg, #192630 0%, #172632 13%, #1e2038 22%, #231f3b 30%, #331c32 38%, #341c2c 46%, #2f2028 51%, #2d202c 56%, #351c28 63%, #301d2d 78%, #1f2334 83%, #19272f 91%, #12233c 97%, #152a3a 100%);
}

.weather {
    display: flex;
    padding-left: 37px;
}

.weather-icon {
    position: relative;
    width: 48px;
    margin-right: 15px;
    padding-top: 15px;
}

.weather-icon svg {
    width: 48px;
    height: 32px;
}

.badge {
    display: block;
    width: 32px;
    height: 32px;
    border-radius: 50%;
    color: #000;
    font-size: 22px;
    text-align: center;
}

.weather-icon .badge {
    position: absolute;
    top: -4px;
    left: 22px;
    background: #ff99a4;
}

.weather-text,
.clock {
    display: flex;
    flex-direction: column;
    padding-bottom: 3px;
    font-size: 22px;
}

.dim {
    color: #c5c8cc;
}

.apps {
    display: flex;
    align-items: center;
}

.app {
    position: relative;
    display: flex;
    align-items: center;
    justify-content: center;
    width: 80px;
    height: 80px;
    margin: 0 4px;
    border: 1px solid transparent;
    border-radius: 8px;
}

.app.current {
    border-color: rgba(255, 255, 255, .1);
    background: rgba(255, 255, 255, .08);
}

.app.running::after {
    content: "";
    position: absolute;
    bottom: 1px;
    width: 12px;
    height: 6px;
    border-radius: 3px;
    background: #a0959c;
}

.app.current::after {
    width: 32px;
    background: #dc9fe6;
}

.pill {
    display: flex;
    align-items: center;
    justify-content: center;
    gap: 10px;
    width: 200px;
    height: 64px;
    margin: 0 6px;
    border-radius: 32px;
    border-top: 1px solid rgba(255, 255, 255, .1);
    background: rgba(255, 255, 255, .08);
}

.tray {
    display: flex;
    align-items: center;
    justify-content: flex-end;
    gap: 16px;
    padding-right: 40px;
}

.tray .plain {
    margin-right: 4px;
}

.ime {
    margin: 0 16px 0 8px;
    font-size: 30px;
}

.clock {
    margin-left: 16px;
    text-align: right;
}

.notice {
    background: #dc9fe6;
}
```
